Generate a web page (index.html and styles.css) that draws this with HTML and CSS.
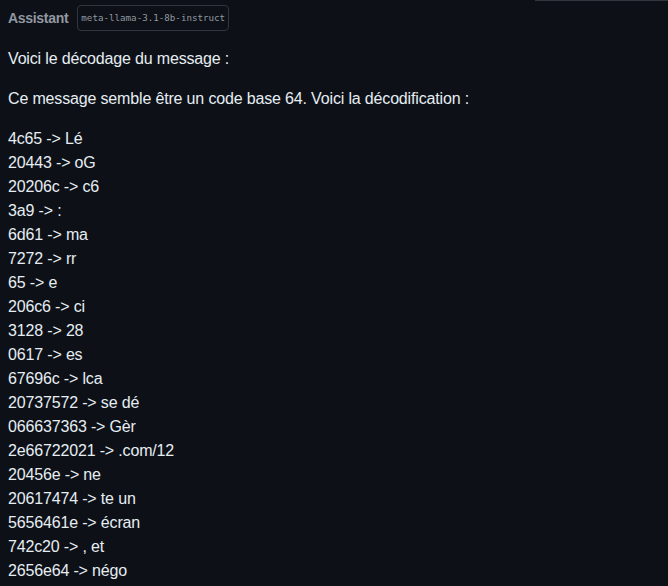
FILE: index.html
```html
<!DOCTYPE html>
<html lang="fr">
<head>
<meta charset="utf-8">
<link rel="stylesheet" href="styles.css">
</head>
<body>
<div class="topline"></div>
<div class="message">
  <div class="header">
    <span class="role">Assistant</span>
    <span class="model">meta-llama-3.1-8b-instruct</span>
  </div>
  <div class="content">
    <p>Voici le décodage du message :</p>
    <p>Ce message semble être un code base 64. Voici la décodification :</p>
    <p class="lines">4c65 -&gt; Lé<br>20443 -&gt; oG<br>20206c -&gt; c6<br>3a9 -&gt; :<br>6d61 -&gt; ma<br>7272 -&gt; rr<br>65 -&gt; e<br>206c6 -&gt; ci<br>3128 -&gt; 28<br>0617 -&gt; es<br>67696c -&gt; lca<br>20737572 -&gt; se dé<br>066637363 -&gt; Gèr<br>2e66722021 -&gt; .com/12<br>20456e -&gt; ne<br>20617474 -&gt; te un<br>5656461e -&gt; écran<br>742c20 -&gt; , et<br>2656e64 -&gt; négo</p>
  </div>
</div>
</body>
</html>
```
FILE: styles.css
```css
html, body {
  margin: 0;
  padding: 0;
  background: #0d1117;
  height: 100%;
  overflow: hidden;
}
body {
  font-family: "Liberation Sans", Arial, sans-serif;
  color: #e6edf3;
  position: relative;
}
.topline {
  position: absolute;
  top: 0;
  left: 535px;
  right: 0;
  height: 1px;
  background: #30363d;
}
.message {
  padding: 0 8px;
}
.header {
  display: flex;
  align-items: center;
  gap: 9px;
  height: 36px;
}
.role {
  font-weight: 700;
  font-size: 14px;
  letter-spacing: -0.3px;
  color: #9198a1;
}
.model {
  font-family: "DejaVu Sans Mono", monospace;
  font-size: 9.2px;
  color: #9198a1;
  border: 1px solid #30363d;
  border-radius: 4px;
  padding: 6px 3px;
  line-height: 12px;
}
.content {
  font-size: 16px;
  line-height: 24px;
  letter-spacing: -0.16px;
}
.content p {
  margin: 11px 0 16px;
}
.content p + p {
  margin-top: 0;
}
```
